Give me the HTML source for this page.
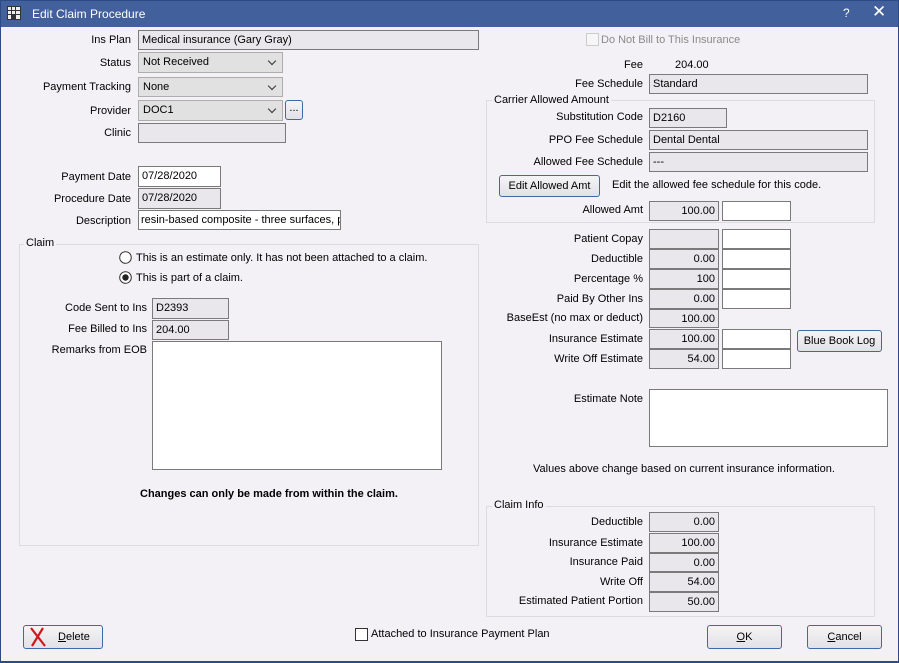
<!DOCTYPE html><html><head><style>
*{box-sizing:border-box}
body{margin:0;width:899px;height:663px;overflow:hidden;background:#f3f1f5;font-family:"Liberation Sans",sans-serif;font-size:11px;color:#000;position:relative}
#frame{position:absolute;left:0;top:0;width:899px;height:663px;border:1px solid #2b4a86;border-bottom:2px solid #2b4a86;pointer-events:none;z-index:5}
#tb{position:absolute;left:0;top:0;width:899px;height:27px;background:#41609c;color:#fff;font-size:12px}
.a{position:absolute;white-space:nowrap}
.l{position:absolute;text-align:right;white-space:nowrap}
.b{position:absolute;border:1px solid #7a7a7a;background:#e9e7eb;padding:2px 3px;white-space:nowrap;overflow:hidden;line-height:14px}
.w{background:#fff}
.r{text-align:right}
.cb{position:absolute;border:1px solid #adadad;background:#e1e1e1;padding:2px 4px;line-height:14px}
.cb:after{content:"";position:absolute;right:7px;top:5px;width:5px;height:5px;border-right:1px solid #333;border-bottom:1px solid #333;transform:rotate(45deg)}
.g{position:absolute;border:1px solid #dcdcdc}
.gl{position:absolute;background:#f3f1f5;padding:0 2px;white-space:nowrap}
.btn{position:absolute;border:1px solid #3d6aa8;border-radius:3px;background:linear-gradient(#f4f4f6,#e2e2e6);text-align:center;line-height:19px}
</style></head><body><div id="frame"></div>
<div id="tb"><svg class="a" style="left:7px;top:6px" width="14" height="14"><rect x="0" y="0" width="14" height="14" fill="#333"/><g fill="#eee"><rect x="1" y="1" width="3" height="3"/><rect x="5" y="1" width="3" height="3"/><rect x="9" y="1" width="4" height="3"/><rect x="1" y="5" width="3" height="3"/><rect x="5" y="5" width="3" height="3"/><rect x="9" y="5" width="4" height="3"/><rect x="1" y="9" width="3" height="4"/><rect x="9" y="9" width="4" height="4"/></g></svg>
<span class="a" style="left:32px;top:7px">Edit Claim Procedure</span><span class="a" style="left:843px;top:6px">?</span><span class="a" style="left:872px;top:2px;font-size:17px">✕</span></div>

<span class="l" style="right:768px;top:34px">Ins Plan</span><div class="b" style="left:138px;top:30px;width:341px;height:20px">Medical insurance (Gary Gray)</div>
<span class="l" style="right:768px;top:57px">Status</span><div class="cb" style="left:138px;top:52px;width:145px;height:21px">Not Received</div>
<span class="l" style="right:768px;top:81px">Payment Tracking</span><div class="cb" style="left:138px;top:77px;width:145px;height:20px">None</div>
<span class="l" style="right:768px;top:105px">Provider</span><div class="cb" style="left:138px;top:100px;width:145px;height:21px">DOC1</div>
<div class="btn" style="left:285px;top:100px;width:18px;height:20px;line-height:15px">...</div>
<span class="l" style="right:768px;top:127px">Clinic</span><div class="b" style="left:138px;top:123px;width:148px;height:20px"></div>
<span class="l" style="right:768px;top:171px">Payment Date</span><div class="b w" style="left:138px;top:166px;width:83px;height:21px">07/28/2020</div>
<span class="l" style="right:768px;top:193px">Procedure Date</span><div class="b" style="left:138px;top:188px;width:83px;height:21px">07/28/2020</div>
<span class="l" style="right:768px;top:215px">Description</span><div class="b w" style="left:138px;top:210px;width:203px;height:20px;padding-left:2px">resin-based composite - three surfaces, po</div>

<div class="g" style="left:19px;top:244px;width:460px;height:302px"></div><span class="gl" style="left:24px;top:237px">Claim</span>
<svg class="a" style="left:119px;top:251px" width="13" height="13"><circle cx="6.5" cy="6.5" r="5.8" fill="#fff" stroke="#333"/></svg><span class="a" style="left:136px;top:252px">This is an estimate only. It has not been attached to a claim.</span>
<svg class="a" style="left:119px;top:271px" width="13" height="13"><circle cx="6.5" cy="6.5" r="5.8" fill="#fff" stroke="#333"/><circle cx="6.5" cy="6.5" r="3.2" fill="#222"/></svg><span class="a" style="left:136px;top:272px">This is part of a claim.</span>
<span class="l" style="right:752px;top:302px">Code Sent to Ins</span><div class="b" style="left:152px;top:298px;width:77px;height:21px">D2393</div>
<span class="l" style="right:752px;top:323px">Fee Billed to Ins</span><div class="b" style="left:152px;top:320px;width:77px;height:20px">204.00</div>
<span class="l" style="right:752px;top:344px">Remarks from EOB</span><div class="b w" style="left:152px;top:341px;width:290px;height:129px"></div>
<span class="a" style="left:140px;top:488px;font-weight:bold">Changes can only be made from within the claim.</span>

<div class="a" style="left:586px;top:33px;width:13px;height:13px;border:1px solid #ccc;background:#f6f6f6"></div><span class="a" style="left:601px;top:34px;color:#8a8a8a">Do Not Bill to This Insurance</span>
<span class="l" style="right:256px;top:59px">Fee</span><span class="a" style="left:675px;top:59px">204.00</span>
<span class="l" style="right:256px;top:78px">Fee Schedule</span><div class="b" style="left:649px;top:74px;width:219px;height:20px">Standard</div>
<div class="g" style="left:486px;top:100px;width:389px;height:123px"></div><span class="gl" style="left:492px;top:94px">Carrier Allowed Amount</span>
<span class="l" style="right:256px;top:111px">Substitution Code</span><div class="b" style="left:649px;top:108px;width:78px;height:20px">D2160</div>
<span class="l" style="right:256px;top:134px">PPO Fee Schedule</span><div class="b" style="left:649px;top:130px;width:219px;height:20px">Dental Dental</div>
<span class="l" style="right:256px;top:156px">Allowed Fee Schedule</span><div class="b" style="left:649px;top:152px;width:219px;height:20px">---</div>
<div class="btn" style="left:499px;top:175px;width:101px;height:22px;line-height:20px">Edit Allowed Amt</div><span class="a" style="left:612px;top:179px">Edit the allowed fee schedule for this code.</span>
<span class="l" style="right:256px;top:204px">Allowed Amt</span><div class="b r" style="left:649px;top:201px;width:70px;height:20px">100.00</div><div class="b w" style="left:722px;top:201px;width:69px;height:20px"></div>

<span class="l" style="right:256px;top:233px">Patient Copay</span><div class="b r" style="left:649px;top:229px;width:70px;height:20px"></div><div class="b w" style="left:722px;top:229px;width:69px;height:20px"></div>
<span class="l" style="right:256px;top:253px">Deductible</span><div class="b r" style="left:649px;top:249px;width:70px;height:20px">0.00</div><div class="b w" style="left:722px;top:249px;width:69px;height:20px"></div>
<span class="l" style="right:256px;top:273px">Percentage %</span><div class="b r" style="left:649px;top:269px;width:70px;height:20px">100</div><div class="b w" style="left:722px;top:269px;width:69px;height:20px"></div>
<span class="l" style="right:256px;top:293px">Paid By Other Ins</span><div class="b r" style="left:649px;top:289px;width:70px;height:20px">0.00</div><div class="b w" style="left:722px;top:289px;width:69px;height:20px"></div>
<span class="l" style="right:256px;top:312px">BaseEst (no max or deduct)</span><div class="b r" style="left:649px;top:309px;width:70px;height:19px">100.00</div>
<span class="l" style="right:256px;top:333px">Insurance Estimate</span><div class="b r" style="left:649px;top:329px;width:70px;height:20px">100.00</div><div class="b w" style="left:722px;top:329px;width:69px;height:20px"></div>
<div class="btn" style="left:797px;top:330px;width:85px;height:22px;line-height:20px">Blue Book Log</div>
<span class="l" style="right:256px;top:353px">Write Off Estimate</span><div class="b r" style="left:649px;top:349px;width:70px;height:20px">54.00</div><div class="b w" style="left:722px;top:349px;width:69px;height:20px"></div>
<span class="l" style="right:256px;top:393px">Estimate Note</span><div class="b w" style="left:649px;top:389px;width:239px;height:58px"></div>
<span class="a" style="left:533px;top:463px">Values above change based on current insurance information.</span>

<div class="g" style="left:486px;top:506px;width:389px;height:111px"></div><span class="gl" style="left:492px;top:499px">Claim Info</span>
<span class="l" style="right:256px;top:516px">Deductible</span><div class="b r" style="left:649px;top:512px;width:70px;height:20px">0.00</div>
<span class="l" style="right:256px;top:537px">Insurance Estimate</span><div class="b r" style="left:649px;top:533px;width:70px;height:20px">100.00</div>
<span class="l" style="right:256px;top:556px">Insurance Paid</span><div class="b r" style="left:649px;top:553px;width:70px;height:19px">0.00</div>
<span class="l" style="right:256px;top:576px">Write Off</span><div class="b r" style="left:649px;top:572px;width:70px;height:20px">54.00</div>
<span class="l" style="right:256px;top:595px">Estimated Patient Portion</span><div class="b r" style="left:649px;top:592px;width:70px;height:20px">50.00</div>

<div class="btn" style="left:23px;top:625px;width:80px;height:24px;line-height:22px;text-align:left;padding-left:34px"><u>D</u>elete</div>
<svg class="a" style="left:28px;top:627px" width="20" height="20"><path d="M3 1 L17 19 M15 1 L4 19" stroke="#d01818" stroke-width="2.2" fill="none"/></svg>
<div class="a" style="left:355px;top:628px;width:13px;height:13px;border:1px solid #333;background:#fff"></div><span class="a" style="left:371px;top:628px">Attached to Insurance Payment Plan</span>
<div class="btn" style="left:707px;top:625px;width:75px;height:24px;line-height:22px"><u>O</u>K</div>
<div class="btn" style="left:807px;top:625px;width:75px;height:24px;line-height:22px"><u>C</u>ancel</div>
</body></html>
